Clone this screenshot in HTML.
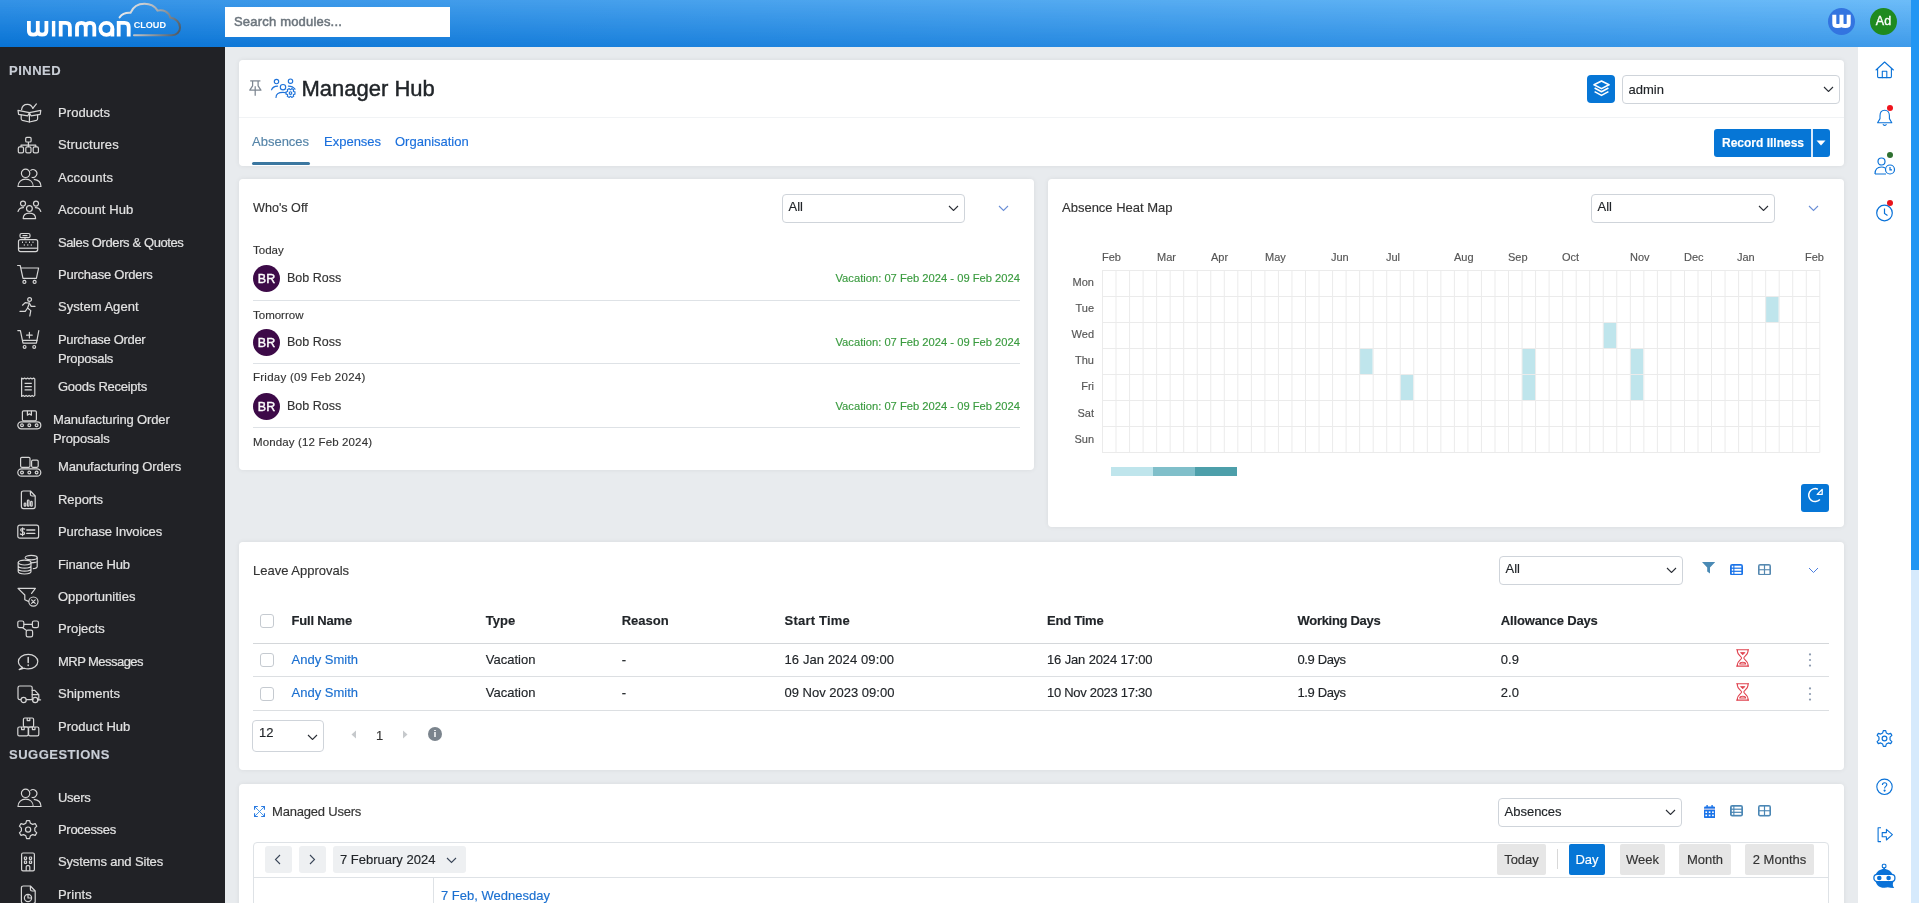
<!DOCTYPE html>
<html><head><meta charset="utf-8">
<style>
*{box-sizing:border-box;margin:0;padding:0}
html,body{width:1919px;height:903px;overflow:hidden;background:#e8ebee;font-family:"Liberation Sans",sans-serif;color:#212529;position:relative}
#wrap{position:absolute;left:0;top:0;width:1919px;height:903px;will-change:transform}
.ab{position:absolute;display:block}
.tx{position:absolute;white-space:nowrap;line-height:1;-webkit-text-stroke-width:0.15px}
#hdr{position:absolute;left:0;top:0;width:1919px;height:47px;background:linear-gradient(to right,#0873d5,#3f9bea)}
#hdr:after{content:"";position:absolute;left:0;top:0;right:0;bottom:0;background:linear-gradient(to right,#3593e6,#6dbcf8);-webkit-mask-image:linear-gradient(to bottom,#000,rgba(0,0,0,0));mask-image:linear-gradient(to bottom,#000,rgba(0,0,0,0))}
#side{position:absolute;left:0;top:47px;width:225px;height:856px;background:#212226}
.si{position:absolute;left:0;width:225px;height:19px;font-size:13px;color:#e2e2e2;line-height:19px}
.si span{position:absolute;left:58px;top:0;white-space:nowrap;-webkit-text-stroke:0.2px #e2e2e2}
.si svg{position:absolute;left:17px;top:-3px}
#rail{position:absolute;left:1858px;top:47px;width:53px;height:856px;background:#fff}
.card{position:absolute;background:#fff;border-radius:4px;box-shadow:0 0 5px rgba(0,0,0,.07)}
.sel{position:absolute;background:#fff;border:1px solid #cfd4da;border-radius:4px}
.hl{position:absolute;height:1px;background:#dee2e6}
</style></head>
<body>
<svg width="0" height="0" style="position:absolute">
<defs>
<g id="i-products" fill="none" stroke="#d6d6d6" stroke-width="1.2" stroke-linejoin="round" stroke-linecap="round">
 <path d="M4.6 9.6 C5 6 7.6 4.3 10.4 4.3 C12.8 4.3 14.8 5.6 15.8 8.2"/><path d="M15.8 8.4 L19.4 3.9"/>
 <path d="M1 10.4 L12.4 12.6 L23.8 10.4 L23.2 14.4 L14 15.8 L12.4 12.8 L10.8 15.8 L1.6 14.4 Z"/>
 <path d="M4.2 15 V18.8 Q4.2 20 5.4 20.4 L12.4 22 L19.4 20.4 Q20.6 20 20.6 18.8 V15"/><path d="M12.4 13 V22"/>
</g>
<g id="i-structures" fill="none" stroke="#d6d6d6" stroke-width="1.2" stroke-linejoin="round">
 <rect x="8.7" y="5.4" width="5.4" height="4.6" rx="1"/>
 <path d="M11.4 10 V13.2 M4 14.9 V13.2 H18.8 V14.9 M11.4 13.2 V14.9"/>
 <rect x="1.3" y="14.9" width="5.2" height="6" rx="1.4"/><rect x="8.8" y="14.9" width="5.2" height="6" rx="1.4"/><rect x="16.2" y="14.9" width="5.2" height="6" rx="1.4"/>
</g>
<g id="i-users" fill="none" stroke="#d6d6d6" stroke-width="1.2" stroke-linejoin="round">
 <circle cx="8.6" cy="8.3" r="4.2"/><path d="M13.4 5.6 A3.9 3.9 0 1 1 14.6 12.2"/>
 <path d="M1 21.5 C1 16.8 4.4 14.2 8.6 14.2 C12.8 14.2 16.2 16.8 16.2 21.5 Z"/>
 <path d="M16.8 14.4 C21 14.8 24 17.4 24 21.5 H16.2"/>
</g>
<g id="i-hub" fill="none" stroke="#d6d6d6" stroke-width="1.2" stroke-linejoin="round" stroke-linecap="round">
 <circle cx="6" cy="6.6" r="2.5"/><circle cx="19" cy="6.6" r="2.5"/><circle cx="12.4" cy="11.6" r="2.9"/>
 <path d="M1 14.5 C1.8 11.9 3.6 10.6 6.5 10.6 M23.8 14.5 C23 11.9 21.2 10.6 18.4 10.6"/>
 <path d="M6.2 21.6 C6.2 18.2 8.8 16.2 12.4 16.2 C16 16.2 18.6 18.2 18.6 21.6 Z"/>
</g>
<g id="i-register" fill="none" stroke="#d6d6d6" stroke-width="1.2" stroke-linejoin="round">
 <rect x="3" y="3.5" width="10" height="4.2" rx="1.5"/><path d="M5.5 5.6 H10.5"/>
 <path d="M8 7.7 V9.6"/>
 <rect x="1.5" y="9.6" width="19.2" height="12" rx="2"/><path d="M1.5 18.2 H20.7"/>
 <path d="M5 12.2 H6 M8.5 12.2 H9.5 M12 12.2 H13 M15.5 12.2 H16.5 M6.8 15 H7.8 M10.3 15 H11.3 M13.8 15 H14.8" stroke-width="1.4"/>
</g>
<g id="i-cart" fill="none" stroke="#d6d6d6" stroke-width="1.2" stroke-linejoin="round" stroke-linecap="round">
 <path d="M0.6 3.5 H3.2 L6 16.4 H19.4 L21.6 6 H3.8"/>
 <circle cx="7.4" cy="19.9" r="1.5"/><circle cx="17.6" cy="19.9" r="1.5"/>
</g>
<g id="i-run" fill="none" stroke="#d6d6d6" stroke-width="1.2" stroke-linejoin="round" stroke-linecap="round">
 <circle cx="12.6" cy="5.5" r="1.9"/>
 <path d="M5.5 11.2 L8.2 8.6 L12.4 9.2 L10.6 14 L13.8 16.6 L12.8 22"/>
 <path d="M10.6 14 L8.2 17.4 H3"/><path d="M12.4 9.2 L14.2 12.4 H18"/>
</g>
<g id="i-cartplus" fill="none" stroke="#d6d6d6" stroke-width="1.2" stroke-linejoin="round" stroke-linecap="round">
 <path d="M0.8 3.6 H3.4 L6 16.2 H19.4 L21.8 3.6"/><path d="M6 13.4 H20"/>
 <path d="M12.4 5.4 V11 M9.6 8.2 H15.2"/>
 <circle cx="7.6" cy="19.9" r="1.4"/><circle cx="17.2" cy="19.9" r="1.4"/>
</g>
<g id="i-receipt" fill="none" stroke="#d6d6d6" stroke-width="1.2" stroke-linejoin="round">
 <path d="M4.6 4 L6.1 5 L7.6 4 L9.1 5 L10.6 4 L12.1 5 L13.6 4 L15.1 5 L16.6 4 L17.8 5 V21.4 L16.6 22.4 L15.1 21.4 L13.6 22.4 L12.1 21.4 L10.6 22.4 L9.1 21.4 L7.6 22.4 L6.1 21.4 L4.6 22.4 Z"/>
 <path d="M7.6 9.4 H14.8 M7.6 12.6 H14.8 M7.6 15.8 H14.8" stroke-width="1.3"/>
</g>
<g id="i-conv1" fill="none" stroke="#d6d6d6" stroke-width="1.2" stroke-linejoin="round">
 <rect x="5.4" y="3.8" width="14" height="10" rx="1.2"/><path d="M10.4 3.8 V8.2 L12.4 6.8 L14.4 8.2 V3.8"/>
 <rect x="0.8" y="14.8" width="23" height="7" rx="3.5"/>
 <circle cx="5" cy="18.3" r="1.4"/><circle cx="12.3" cy="18.3" r="1.4"/><circle cx="19.6" cy="18.3" r="1.4"/>
</g>
<g id="i-conv2" fill="none" stroke="#d6d6d6" stroke-width="1.2" stroke-linejoin="round">
 <rect x="3.6" y="3.3" width="9.4" height="10" rx="1.2"/><rect x="14.6" y="6.2" width="6.6" height="7.1" rx="1.2"/>
 <rect x="0.8" y="14.8" width="23" height="7.4" rx="3.7"/>
 <circle cx="5" cy="18.5" r="1.4"/><circle cx="12.3" cy="18.5" r="1.4"/><circle cx="19.6" cy="18.5" r="1.4"/>
</g>
<g id="i-report" fill="none" stroke="#d6d6d6" stroke-width="1.2" stroke-linejoin="round">
 <path d="M6.4 4 H13.4 L18.2 9 V19.6 Q18.2 21.6 16.2 21.6 H6.4 Q4.4 21.6 4.4 19.6 V6 Q4.4 4 6.4 4 Z"/><path d="M13.4 4 V7.2 Q13.4 9 15.2 9 H18.2"/>
 <rect x="7.2" y="16" width="1.6" height="3.2" rx=".8"/><rect x="10.4" y="13" width="1.6" height="6.2" rx=".8"/><rect x="13.6" y="14.4" width="1.6" height="4.8" rx=".8"/>
</g>
<g id="i-invoice" fill="none" stroke="#d6d6d6" stroke-width="1.2" stroke-linejoin="round" stroke-linecap="round">
 <rect x="0.8" y="6.2" width="20.8" height="13" rx="2"/>
 <path d="M7.6 10.2 C7 9.4 3.6 9.2 3.6 11 C3.6 12.8 7.6 12.2 7.6 14.2 C7.6 16 4.2 15.8 3.4 15 M5.6 8.8 V16.6"/>
 <path d="M9.8 11 H17.8 M9.8 14.4 H17.8" stroke-width="1.4"/>
</g>
<g id="i-coins" fill="none" stroke="#d6d6d6" stroke-width="1.2" stroke-linejoin="round">
 <path d="M8.2 5.6 C8.2 4.3 10.9 3.4 14.2 3.4 C17.5 3.4 20.2 4.3 20.2 5.6 V14.4 C20.2 15.5 18.4 16.4 15.8 16.6"/>
 <path d="M8.2 5.6 C8.2 6.9 10.9 7.8 14.2 7.8 C17.5 7.8 20.2 6.9 20.2 5.6 M13.8 10.8 C17.2 10.8 20.2 10 20.2 9.6"/>
 <ellipse cx="7.6" cy="10.6" rx="6.4" ry="2.4"/>
 <path d="M1.2 10.6 V19.6 C1.2 21 4 22 7.6 22 C11.2 22 14 21 14 19.6 V10.6 M1.2 13.8 C1.2 15.2 4 16.2 7.6 16.2 C11.2 16.2 14 15.2 14 13.8 M1.2 16.8 C1.2 18.2 4 19.2 7.6 19.2 C11.2 19.2 14 18.2 14 16.8"/>
</g>
<g id="i-funnel" fill="none" stroke="#d6d6d6" stroke-width="1.2" stroke-linejoin="round" stroke-linecap="round">
 <path d="M11.4 17.4 L7.8 15.8 V11 L1 4.4 H18.4 L14.6 9.4"/>
 <circle cx="16.4" cy="17.6" r="4.6"/><path d="M14.6 15.8 L18.2 19.4 M18.2 15.8 L14.6 19.4"/>
</g>
<g id="i-projects" fill="none" stroke="#d6d6d6" stroke-width="1.2" stroke-linejoin="round">
 <rect x="0.8" y="5" width="6" height="6.6" rx="1.6"/><rect x="15.4" y="5" width="6" height="6.6" rx="1.6"/><rect x="9.2" y="14.2" width="6.4" height="6.6" rx="1.6"/>
 <path d="M6.8 8.3 H15.4 M5.4 11.6 L9.6 14.6"/>
</g>
<g id="i-msg" fill="none" stroke="#d6d6d6" stroke-width="1.2" stroke-linejoin="round" stroke-linecap="round">
 <path d="M5.4 18.4 C2.8 17 1.4 14.8 1.4 12.6 C1.4 8.6 5.8 5.4 11.2 5.4 C16.6 5.4 20.8 8.6 20.8 12.6 C20.8 16.6 16.6 19.8 11.2 19.8 C9.8 19.8 8.4 19.6 7.2 19.2 L2.2 20.6 Z"/>
 <path d="M11.2 8.6 V13.6 M11.2 16 V16.4" stroke-width="1.5"/>
</g>
<g id="i-truck" fill="none" stroke="#d6d6d6" stroke-width="1.2" stroke-linejoin="round" stroke-linecap="round">
 <path d="M3.6 18.6 H2.8 Q1 18.6 1 16.8 V6.8 Q1 5 2.8 5 H13.4 Q15.2 5 15.2 6.8 V18.6 H9.4"/>
 <path d="M15.2 9.4 H17.8 L21.8 13.6 V18.6 H20.6 M15.2 13.6 H21.8 M15.6 18.6 H16"/>
 <circle cx="6.6" cy="19" r="2.6"/><circle cx="18.2" cy="19" r="2.6"/><path d="M21 18.8 H23.6"/>
</g>
<g id="i-boxes" fill="none" stroke="#d6d6d6" stroke-width="1.2" stroke-linejoin="round">
 <rect x="6.4" y="4" width="10.2" height="9" rx="1.4"/><path d="M10.2 4 V6.6 H12.8 V4"/>
 <rect x="0.8" y="13" width="10.4" height="8.8" rx="1.4"/><path d="M4.6 13 V15.6 H7.2 V13"/>
 <rect x="11.6" y="13" width="10.2" height="8.8" rx="1.4"/><path d="M15.4 13 V15.6 H18 V13"/>
</g>
<g id="i-gear" fill="none" stroke="#d6d6d6" stroke-width="1.2" stroke-linejoin="round">
 <path d="M9.6 3.6 H12.6 L13.4 6.2 L15.6 7.4 L18.2 6.6 L19.8 9.2 L17.8 11.2 V13.8 L19.8 15.8 L18.2 18.4 L15.6 17.6 L13.4 18.8 L12.6 21.6 H9.6 L8.8 18.8 L6.6 17.6 L4 18.4 L2.4 15.8 L4.4 13.8 V11.2 L2.4 9.2 L4 6.6 L6.6 7.4 L8.8 6.2 Z"/>
 <circle cx="11.1" cy="12.6" r="2.6"/>
</g>
<g id="i-building" fill="none" stroke="#d6d6d6" stroke-width="1.2" stroke-linejoin="round">
 <rect x="4.6" y="4" width="12.8" height="17.8" rx="1.4"/>
 <rect x="7.4" y="8" width="2.2" height="2.4" rx=".6"/><rect x="12.4" y="8" width="2.2" height="2.4" rx=".6"/>
 <rect x="7.4" y="12" width="2.2" height="2.4" rx=".6"/><rect x="12.4" y="12" width="2.2" height="2.4" rx=".6"/>
 <path d="M9.2 21.8 V17.8 Q9.2 16.6 10.4 16.6 H11.6 Q12.8 16.6 12.8 17.8 V21.8"/>
</g>
<g id="i-print" fill="none" stroke="#d6d6d6" stroke-width="1.2" stroke-linejoin="round">
 <path d="M6.4 4 H13.4 L18.2 9 V19.6 Q18.2 21.6 16.2 21.6 H6.4 Q4.4 21.6 4.4 19.6 V6 Q4.4 4 6.4 4 Z"/><path d="M13.4 4 V7.2 Q13.4 9 15.2 9 H18.2"/>
 <circle cx="11" cy="16" r="3.6"/><path d="M11 12.4 V16 H14.6"/>
</g>
</defs></svg>
<div id="wrap"><div id="hdr"></div>
<div class="ab" style="left:225px;top:7px;width:225px;height:30px;background:#fff"></div>
<div class="tx" style="left:234px;top:15.0px;font-size:13px;color:#6c757d;font-weight:normal;-webkit-text-stroke:0.5px #6c757d;letter-spacing:0.19px">Search modules...</div>
<svg class="ab" style="left:0px;top:0px" width="190" height="44" viewBox="0 0 190 44">
<defs><linearGradient id="cg" x1="119" y1="4" x2="180" y2="35" gradientUnits="userSpaceOnUse"><stop offset="0" stop-color="#f2f4f6"/><stop offset=".45" stop-color="#b8bcc0"/><stop offset="1" stop-color="#4a5560"/></linearGradient></defs>
<path d="M119.6 17.4 C122 14 126 12.5 130.5 12.8 C133 7 138.5 3.8 144.5 3.8 C150 3.8 155 6.5 157.6 10.6 C163 9 169 12 170.2 17.5 C176 18.5 180 22.5 180 27.5 C180 32 176.5 35.2 172 35.2 H134" fill="none" stroke="url(#cg)" stroke-width="2" stroke-linecap="round"/>
<g fill="none" stroke="#fff" stroke-width="3.8">
<path d="M28.9 21 V31 Q28.9 34.6 33.2 34.6 Q37.8 34.6 37.8 31 V21 M37.8 31 Q37.8 34.6 42.1 34.6 Q46.4 34.6 46.4 31 V21"/>
<path d="M53.6 21 V36.5" stroke-width="3.4"/>
<path d="M60.7 36.5 V22.9 H65.8 Q69.9 22.9 69.9 27 V36.5"/>
<path d="M77 36.5 V27 Q77 22.9 81.4 22.9 Q85.7 22.9 85.7 27 V36.5 M85.7 27 Q85.7 22.9 90 22.9 Q94.3 22.9 94.3 27 V36.5"/>
<circle cx="106.4" cy="28.8" r="6"/><path d="M112.4 28.8 V36.5"/>
<path d="M118.7 36.5 V22.9 H124.6 Q128.7 22.9 128.7 27 V36.5"/>
</g>
<text x="133.7" y="27.7" font-family="Liberation Sans" font-weight="bold" font-size="9.4" fill="#fff" textLength="32.3" lengthAdjust="spacingAndGlyphs">CLOUD</text>
</svg>
<div class="ab" style="left:1828px;top:8px;width:27px;height:27px;border-radius:50%;background:#3374e0"></div>
<svg class="ab" style="left:1828px;top:8px" width="27" height="27" viewBox="0 0 27 27"><path d="M6.3 6.8 V15.5 Q6.3 18.1 9.3 18.1 Q13.5 18.1 13.5 15.5 V6.8 M13.5 15.5 Q13.5 18.1 17.4 18.1 Q20.7 18.1 20.7 15.5 V6.8" fill="none" stroke="#fff" stroke-width="4"/></svg>
<div class="ab" style="left:1870px;top:8px;width:27px;height:27px;border-radius:50%;background:#1f8a1f"></div>
<div class="tx" style="left:1683.5px;width:400px;text-align:center;top:14.55px;font-size:12.5px;color:#fff;font-weight:normal;-webkit-text-stroke:0.35px #fff">Ad</div>
<div id="side"></div>
<div class="tx" style="left:9px;top:64.0px;font-size:13px;color:#c9ced6;font-weight:bold;letter-spacing:0.5px">PINNED</div>
<div class="tx" style="left:9px;top:748.0px;font-size:13px;color:#c9ced6;font-weight:bold;letter-spacing:0.5px">SUGGESTIONS</div>
<div class="si" style="top:102.6px"><svg width="26" height="24" viewBox="0 0 26 24"><use href="#i-products"/></svg><span style="left:58px;letter-spacing:0.100px">Products</span></div>
<div class="si" style="top:135.0px"><svg width="26" height="24" viewBox="0 0 26 24"><use href="#i-structures"/></svg><span style="left:58px;letter-spacing:0.156px">Structures</span></div>
<div class="si" style="top:168.0px"><svg width="26" height="24" viewBox="0 0 26 24"><use href="#i-users"/></svg><span style="left:58px;letter-spacing:0.214px">Accounts</span></div>
<div class="si" style="top:199.8px"><svg width="26" height="24" viewBox="0 0 26 24"><use href="#i-hub"/></svg><span style="left:58px;letter-spacing:0.080px">Account Hub</span></div>
<div class="si" style="top:233.3px"><svg width="26" height="24" viewBox="0 0 26 24"><use href="#i-register"/></svg><span style="left:58px;letter-spacing:-0.390px">Sales Orders &amp; Quotes</span></div>
<div class="si" style="top:265.0px"><svg width="26" height="24" viewBox="0 0 26 24"><use href="#i-cart"/></svg><span style="left:58px;letter-spacing:-0.250px">Purchase Orders</span></div>
<div class="si" style="top:297.0px"><svg width="26" height="24" viewBox="0 0 26 24"><use href="#i-run"/></svg><span style="left:58px;letter-spacing:0.027px">System Agent</span></div>
<div class="si" style="top:330.3px"><svg width="26" height="24" viewBox="0 0 26 24"><use href="#i-cartplus"/></svg><span style="left:58px;letter-spacing:-0.315px">Purchase Order<br>Proposals</span></div>
<div class="si" style="top:376.6px"><svg width="26" height="24" viewBox="0 0 26 24"><use href="#i-receipt"/></svg><span style="left:58px;letter-spacing:-0.254px">Goods Receipts</span></div>
<div class="si" style="top:410.0px"><svg width="26" height="24" viewBox="0 0 26 24"><use href="#i-conv1"/></svg><span style="left:53px;letter-spacing:-0.139px">Manufacturing Order<br>Proposals</span></div>
<div class="si" style="top:457.0px"><svg width="26" height="24" viewBox="0 0 26 24"><use href="#i-conv2"/></svg><span style="left:58px;letter-spacing:-0.126px">Manufacturing Orders</span></div>
<div class="si" style="top:490.0px"><svg width="26" height="24" viewBox="0 0 26 24"><use href="#i-report"/></svg><span style="left:58px;letter-spacing:-0.067px">Reports</span></div>
<div class="si" style="top:522.0px"><svg width="26" height="24" viewBox="0 0 26 24"><use href="#i-invoice"/></svg><span style="left:58px;letter-spacing:-0.125px">Purchase Invoices</span></div>
<div class="si" style="top:555.0px"><svg width="26" height="24" viewBox="0 0 26 24"><use href="#i-coins"/></svg><span style="left:58px;letter-spacing:-0.170px">Finance Hub</span></div>
<div class="si" style="top:587.0px"><svg width="26" height="24" viewBox="0 0 26 24"><use href="#i-funnel"/></svg><span style="left:58px;letter-spacing:0.008px">Opportunities</span></div>
<div class="si" style="top:619.0px"><svg width="26" height="24" viewBox="0 0 26 24"><use href="#i-projects"/></svg><span style="left:58px;letter-spacing:-0.014px">Projects</span></div>
<div class="si" style="top:652.0px"><svg width="26" height="24" viewBox="0 0 26 24"><use href="#i-msg"/></svg><span style="left:58px;letter-spacing:-0.545px">MRP Messages</span></div>
<div class="si" style="top:684.0px"><svg width="26" height="24" viewBox="0 0 26 24"><use href="#i-truck"/></svg><span style="left:58px;letter-spacing:0.075px">Shipments</span></div>
<div class="si" style="top:717.0px"><svg width="26" height="24" viewBox="0 0 26 24"><use href="#i-boxes"/></svg><span style="left:58px;letter-spacing:-0.000px">Product Hub</span></div>
<div class="si" style="top:788.0px"><svg width="26" height="24" viewBox="0 0 26 24"><use href="#i-users"/></svg><span style="left:58px;letter-spacing:-0.325px">Users</span></div>
<div class="si" style="top:820.0px"><svg width="26" height="24" viewBox="0 0 26 24"><use href="#i-gear"/></svg><span style="left:58px;letter-spacing:-0.312px">Processes</span></div>
<div class="si" style="top:852.0px"><svg width="26" height="24" viewBox="0 0 26 24"><use href="#i-building"/></svg><span style="left:58px;letter-spacing:-0.156px">Systems and Sites</span></div>
<div class="si" style="top:885.0px"><svg width="26" height="24" viewBox="0 0 26 24"><use href="#i-print"/></svg><span style="left:58px;letter-spacing:0.120px">Prints</span></div>
<div id="rail"></div>
<div class="ab" style="left:1911px;top:0;width:8px;height:903px;background:#d6eafc"></div>
<div class="ab" style="left:1911px;top:0;width:8px;height:570px;background:#2196f3"></div>
<div class="card" style="left:239px;top:60px;width:1605px;height:106px"></div>
<div class="hl" style="left:239px;top:117px;width:1605px;background:#f1f3f5"></div>
<div class="tx" style="left:301.5px;top:77.5px;font-size:22px;color:#212529;font-weight:normal;-webkit-text-stroke:0.45px #212529">Manager Hub</div>
<div class="tx" style="left:252px;top:135.0px;font-size:13px;color:#5584a8;font-weight:normal;">Absences</div>
<div class="tx" style="left:324px;top:135.0px;font-size:13px;color:#1a6fdc;font-weight:normal;">Expenses</div>
<div class="tx" style="left:395px;top:135.0px;font-size:13px;color:#1a6fdc;font-weight:normal;">Organisation</div>
<div class="ab" style="left:252px;top:162px;width:58px;height:3px;border-radius:2px;background:#3b77a0"></div>
<div class="ab" style="left:1587px;top:75px;width:28px;height:28px;border-radius:4px;background:#0676d6"></div>
<svg class="ab" style="left:1592.5px;top:80px" width="17" height="17" viewBox="0 0 17 17" fill="none" stroke="#fff" stroke-width="1.6" stroke-linejoin="round"><path d="M8.5 1 L16 4.8 L8.5 8.6 L1 4.8 Z"/><path d="M1.6 8 L8.5 11.8 L15.4 8"/><path d="M1.6 11.6 L8.5 15.4 L15.4 11.6"/></svg>
<div class="sel" style="left:1622px;top:75px;width:218px;height:29px"></div><div class="tx" style="left:1628.5px;top:82.9px;font-size:13px;color:#212529;font-weight:normal;">admin</div><svg class="ab" style="left:1823px;top:85.9px" width="11" height="6.5" viewBox="-1 -1 11 6.5"><path d="M0 0 L4.5 4.5 L9 0" fill="none" stroke="#2b2f36" stroke-width="1.1"/></svg>
<div class="ab" style="left:1714px;top:129px;width:116px;height:28px;border-radius:3px;background:#0676d6"></div>
<div class="ab" style="left:1811px;top:129px;width:1.5px;height:28px;background:#dbeafa"></div>
<div class="tx" style="left:1722px;top:137.0px;font-size:12px;color:#fff;font-weight:bold;">Record Illness</div>
<svg class="ab" style="left:1816px;top:140px" width="10" height="6" viewBox="0 0 10 6"><path d="M0.5 0.5 H9.5 L5 5.5 Z" fill="#fff"/></svg>
<div class="card" style="left:239px;top:179px;width:795px;height:291px"></div>
<div class="tx" style="left:253px;top:201.7px;font-size:12.6px;color:#333;font-weight:normal;">Who's Off</div>
<div class="sel" style="left:782px;top:194px;width:183px;height:29px"></div><div class="tx" style="left:788.5px;top:200.2px;font-size:13px;color:#212529;font-weight:normal;">All</div><svg class="ab" style="left:948px;top:204.9px" width="11" height="6.5" viewBox="-1 -1 11 6.5"><path d="M0 0 L4.5 4.5 L9 0" fill="none" stroke="#2b2f36" stroke-width="1.1"/></svg>
<svg class="ab" style="left:998px;top:205px" width="11" height="6.5" viewBox="-1 -1 11 6.5"><path d="M0 0 L4.5 4.5 L9 0" fill="none" stroke="#6b8fd6" stroke-width="1.1"/></svg>
<div class="tx" style="left:253px;top:245.25px;font-size:11.5px;color:#333;font-weight:normal;">Today</div>
<div class="ab" style="left:253px;top:265px;width:27px;height:27px;border-radius:50%;background:#3d0a48"></div>
<div class="tx" style="left:66.5px;width:400px;text-align:center;top:272.75px;font-size:12.5px;color:#fff;font-weight:normal;-webkit-text-stroke:0.4px #fff">BR</div>
<div class="tx" style="left:287px;top:271.75px;font-size:12.5px;color:#333;font-weight:normal;">Bob Ross</div>
<div class="tx" style="right:899px;top:273.0px;font-size:11.2px;color:#3a9b3f;font-weight:normal;">Vacation: 07 Feb 2024 - 09 Feb 2024</div>
<div class="hl" style="left:253px;top:300px;width:767px"></div>
<div class="tx" style="left:253px;top:309.65px;font-size:11.5px;color:#333;font-weight:normal;">Tomorrow</div>
<div class="ab" style="left:253px;top:329px;width:27px;height:27px;border-radius:50%;background:#3d0a48"></div>
<div class="tx" style="left:66.5px;width:400px;text-align:center;top:336.75px;font-size:12.5px;color:#fff;font-weight:normal;-webkit-text-stroke:0.4px #fff">BR</div>
<div class="tx" style="left:287px;top:335.75px;font-size:12.5px;color:#333;font-weight:normal;">Bob Ross</div>
<div class="tx" style="right:899px;top:337.0px;font-size:11.2px;color:#3a9b3f;font-weight:normal;">Vacation: 07 Feb 2024 - 09 Feb 2024</div>
<div class="hl" style="left:253px;top:363px;width:767px"></div>
<div class="tx" style="left:253px;top:372.25px;font-size:11.5px;color:#333;font-weight:normal;letter-spacing:0.26px">Friday (09 Feb 2024)</div>
<div class="ab" style="left:253px;top:393px;width:27px;height:27px;border-radius:50%;background:#3d0a48"></div>
<div class="tx" style="left:66.5px;width:400px;text-align:center;top:400.75px;font-size:12.5px;color:#fff;font-weight:normal;-webkit-text-stroke:0.4px #fff">BR</div>
<div class="tx" style="left:287px;top:399.75px;font-size:12.5px;color:#333;font-weight:normal;">Bob Ross</div>
<div class="tx" style="right:899px;top:401.0px;font-size:11.2px;color:#3a9b3f;font-weight:normal;">Vacation: 07 Feb 2024 - 09 Feb 2024</div>
<div class="hl" style="left:253px;top:427px;width:767px"></div>
<div class="tx" style="left:253px;top:436.65px;font-size:11.5px;color:#333;font-weight:normal;letter-spacing:0.14px">Monday (12 Feb 2024)</div>
<div class="card" style="left:1048px;top:179px;width:796px;height:348px"></div>
<div class="tx" style="left:1062px;top:201.0px;font-size:13px;color:#333;font-weight:normal;">Absence Heat Map</div>
<div class="sel" style="left:1591px;top:194px;width:184px;height:29px"></div><div class="tx" style="left:1597.5px;top:200.2px;font-size:13px;color:#212529;font-weight:normal;">All</div><svg class="ab" style="left:1758px;top:204.9px" width="11" height="6.5" viewBox="-1 -1 11 6.5"><path d="M0 0 L4.5 4.5 L9 0" fill="none" stroke="#2b2f36" stroke-width="1.1"/></svg>
<svg class="ab" style="left:1808px;top:205px" width="11" height="6.5" viewBox="-1 -1 11 6.5"><path d="M0 0 L4.5 4.5 L9 0" fill="none" stroke="#6b8fd6" stroke-width="1.1"/></svg>
<svg class="ab" style="left:1102px;top:270px" width="720" height="184" viewBox="0 0 720 184"><rect x="257.65" y="78.5" width="13.03" height="25.5" fill="#bfe5ec"/><rect x="298.25" y="104.5" width="13.03" height="25.5" fill="#bfe5ec"/><rect x="420.05" y="78.5" width="13.03" height="25.5" fill="#bfe5ec"/><rect x="420.05" y="104.5" width="13.03" height="25.5" fill="#bfe5ec"/><rect x="501.26" y="52.5" width="13.03" height="25.5" fill="#bfe5ec"/><rect x="528.33" y="78.5" width="13.03" height="25.5" fill="#bfe5ec"/><rect x="528.33" y="104.5" width="13.03" height="25.5" fill="#bfe5ec"/><rect x="663.67" y="26.5" width="13.03" height="25.5" fill="#bfe5ec"/><line x1="0.50" y1="0" x2="0.50" y2="182.5" stroke="#ebebeb" stroke-width="1"/><line x1="14.03" y1="0" x2="14.03" y2="182.5" stroke="#ebebeb" stroke-width="1"/><line x1="27.57" y1="0" x2="27.57" y2="182.5" stroke="#ebebeb" stroke-width="1"/><line x1="41.10" y1="0" x2="41.10" y2="182.5" stroke="#ebebeb" stroke-width="1"/><line x1="54.64" y1="0" x2="54.64" y2="182.5" stroke="#ebebeb" stroke-width="1"/><line x1="68.17" y1="0" x2="68.17" y2="182.5" stroke="#ebebeb" stroke-width="1"/><line x1="81.70" y1="0" x2="81.70" y2="182.5" stroke="#ebebeb" stroke-width="1"/><line x1="95.24" y1="0" x2="95.24" y2="182.5" stroke="#ebebeb" stroke-width="1"/><line x1="108.77" y1="0" x2="108.77" y2="182.5" stroke="#ebebeb" stroke-width="1"/><line x1="122.31" y1="0" x2="122.31" y2="182.5" stroke="#ebebeb" stroke-width="1"/><line x1="135.84" y1="0" x2="135.84" y2="182.5" stroke="#ebebeb" stroke-width="1"/><line x1="149.37" y1="0" x2="149.37" y2="182.5" stroke="#ebebeb" stroke-width="1"/><line x1="162.91" y1="0" x2="162.91" y2="182.5" stroke="#ebebeb" stroke-width="1"/><line x1="176.44" y1="0" x2="176.44" y2="182.5" stroke="#ebebeb" stroke-width="1"/><line x1="189.98" y1="0" x2="189.98" y2="182.5" stroke="#ebebeb" stroke-width="1"/><line x1="203.51" y1="0" x2="203.51" y2="182.5" stroke="#ebebeb" stroke-width="1"/><line x1="217.04" y1="0" x2="217.04" y2="182.5" stroke="#ebebeb" stroke-width="1"/><line x1="230.58" y1="0" x2="230.58" y2="182.5" stroke="#ebebeb" stroke-width="1"/><line x1="244.11" y1="0" x2="244.11" y2="182.5" stroke="#ebebeb" stroke-width="1"/><line x1="257.65" y1="0" x2="257.65" y2="182.5" stroke="#ebebeb" stroke-width="1"/><line x1="271.18" y1="0" x2="271.18" y2="182.5" stroke="#ebebeb" stroke-width="1"/><line x1="284.71" y1="0" x2="284.71" y2="182.5" stroke="#ebebeb" stroke-width="1"/><line x1="298.25" y1="0" x2="298.25" y2="182.5" stroke="#ebebeb" stroke-width="1"/><line x1="311.78" y1="0" x2="311.78" y2="182.5" stroke="#ebebeb" stroke-width="1"/><line x1="325.32" y1="0" x2="325.32" y2="182.5" stroke="#ebebeb" stroke-width="1"/><line x1="338.85" y1="0" x2="338.85" y2="182.5" stroke="#ebebeb" stroke-width="1"/><line x1="352.38" y1="0" x2="352.38" y2="182.5" stroke="#ebebeb" stroke-width="1"/><line x1="365.92" y1="0" x2="365.92" y2="182.5" stroke="#ebebeb" stroke-width="1"/><line x1="379.45" y1="0" x2="379.45" y2="182.5" stroke="#ebebeb" stroke-width="1"/><line x1="392.99" y1="0" x2="392.99" y2="182.5" stroke="#ebebeb" stroke-width="1"/><line x1="406.52" y1="0" x2="406.52" y2="182.5" stroke="#ebebeb" stroke-width="1"/><line x1="420.05" y1="0" x2="420.05" y2="182.5" stroke="#ebebeb" stroke-width="1"/><line x1="433.59" y1="0" x2="433.59" y2="182.5" stroke="#ebebeb" stroke-width="1"/><line x1="447.12" y1="0" x2="447.12" y2="182.5" stroke="#ebebeb" stroke-width="1"/><line x1="460.66" y1="0" x2="460.66" y2="182.5" stroke="#ebebeb" stroke-width="1"/><line x1="474.19" y1="0" x2="474.19" y2="182.5" stroke="#ebebeb" stroke-width="1"/><line x1="487.72" y1="0" x2="487.72" y2="182.5" stroke="#ebebeb" stroke-width="1"/><line x1="501.26" y1="0" x2="501.26" y2="182.5" stroke="#ebebeb" stroke-width="1"/><line x1="514.79" y1="0" x2="514.79" y2="182.5" stroke="#ebebeb" stroke-width="1"/><line x1="528.33" y1="0" x2="528.33" y2="182.5" stroke="#ebebeb" stroke-width="1"/><line x1="541.86" y1="0" x2="541.86" y2="182.5" stroke="#ebebeb" stroke-width="1"/><line x1="555.39" y1="0" x2="555.39" y2="182.5" stroke="#ebebeb" stroke-width="1"/><line x1="568.93" y1="0" x2="568.93" y2="182.5" stroke="#ebebeb" stroke-width="1"/><line x1="582.46" y1="0" x2="582.46" y2="182.5" stroke="#ebebeb" stroke-width="1"/><line x1="596.00" y1="0" x2="596.00" y2="182.5" stroke="#ebebeb" stroke-width="1"/><line x1="609.53" y1="0" x2="609.53" y2="182.5" stroke="#ebebeb" stroke-width="1"/><line x1="623.06" y1="0" x2="623.06" y2="182.5" stroke="#ebebeb" stroke-width="1"/><line x1="636.60" y1="0" x2="636.60" y2="182.5" stroke="#ebebeb" stroke-width="1"/><line x1="650.13" y1="0" x2="650.13" y2="182.5" stroke="#ebebeb" stroke-width="1"/><line x1="663.67" y1="0" x2="663.67" y2="182.5" stroke="#ebebeb" stroke-width="1"/><line x1="677.20" y1="0" x2="677.20" y2="182.5" stroke="#ebebeb" stroke-width="1"/><line x1="690.73" y1="0" x2="690.73" y2="182.5" stroke="#ebebeb" stroke-width="1"/><line x1="704.27" y1="0" x2="704.27" y2="182.5" stroke="#ebebeb" stroke-width="1"/><line x1="717.80" y1="0" x2="717.80" y2="182.5" stroke="#ebebeb" stroke-width="1"/><line x1="0" y1="0.5" x2="717.80" y2="0.5" stroke="#ebebeb" stroke-width="1"/><line x1="0" y1="26.5" x2="717.80" y2="26.5" stroke="#ebebeb" stroke-width="1"/><line x1="0" y1="52.5" x2="717.80" y2="52.5" stroke="#ebebeb" stroke-width="1"/><line x1="0" y1="78.5" x2="717.80" y2="78.5" stroke="#ebebeb" stroke-width="1"/><line x1="0" y1="104.5" x2="717.80" y2="104.5" stroke="#ebebeb" stroke-width="1"/><line x1="0" y1="130.5" x2="717.80" y2="130.5" stroke="#ebebeb" stroke-width="1"/><line x1="0" y1="156.5" x2="717.80" y2="156.5" stroke="#ebebeb" stroke-width="1"/><line x1="0" y1="182.5" x2="717.80" y2="182.5" stroke="#ebebeb" stroke-width="1"/></svg>
<div class="tx" style="left:1102px;top:251.5px;font-size:11px;color:#555;font-weight:normal;">Feb</div>
<div class="tx" style="left:1157px;top:251.5px;font-size:11px;color:#555;font-weight:normal;">Mar</div>
<div class="tx" style="left:1211px;top:251.5px;font-size:11px;color:#555;font-weight:normal;">Apr</div>
<div class="tx" style="left:1265px;top:251.5px;font-size:11px;color:#555;font-weight:normal;">May</div>
<div class="tx" style="left:1331px;top:251.5px;font-size:11px;color:#555;font-weight:normal;">Jun</div>
<div class="tx" style="left:1386px;top:251.5px;font-size:11px;color:#555;font-weight:normal;">Jul</div>
<div class="tx" style="left:1454px;top:251.5px;font-size:11px;color:#555;font-weight:normal;">Aug</div>
<div class="tx" style="left:1508px;top:251.5px;font-size:11px;color:#555;font-weight:normal;">Sep</div>
<div class="tx" style="left:1562px;top:251.5px;font-size:11px;color:#555;font-weight:normal;">Oct</div>
<div class="tx" style="left:1630px;top:251.5px;font-size:11px;color:#555;font-weight:normal;">Nov</div>
<div class="tx" style="left:1684px;top:251.5px;font-size:11px;color:#555;font-weight:normal;">Dec</div>
<div class="tx" style="left:1737px;top:251.5px;font-size:11px;color:#555;font-weight:normal;">Jan</div>
<div class="tx" style="left:1805px;top:251.5px;font-size:11px;color:#555;font-weight:normal;">Feb</div>
<div class="tx" style="right:825px;top:276.5px;font-size:11px;color:#555;font-weight:normal;">Mon</div>
<div class="tx" style="right:825px;top:302.7px;font-size:11px;color:#555;font-weight:normal;">Tue</div>
<div class="tx" style="right:825px;top:328.9px;font-size:11px;color:#555;font-weight:normal;">Wed</div>
<div class="tx" style="right:825px;top:355.1px;font-size:11px;color:#555;font-weight:normal;">Thu</div>
<div class="tx" style="right:825px;top:381.3px;font-size:11px;color:#555;font-weight:normal;">Fri</div>
<div class="tx" style="right:825px;top:407.5px;font-size:11px;color:#555;font-weight:normal;">Sat</div>
<div class="tx" style="right:825px;top:433.7px;font-size:11px;color:#555;font-weight:normal;">Sun</div>
<div class="ab" style="left:1111px;top:467px;width:42px;height:9px;background:#bfe5ec"></div>
<div class="ab" style="left:1153px;top:467px;width:42px;height:9px;background:#80bfca"></div>
<div class="ab" style="left:1195px;top:467px;width:42px;height:9px;background:#4d9faa"></div>
<div class="ab" style="left:1801px;top:484px;width:28px;height:28px;border-radius:3px;background:#0676d6"></div>
<svg class="ab" style="left:1806px;top:486px" width="18" height="18" viewBox="0 0 18 18" fill="none" stroke="#fff" stroke-width="1.5"><path d="M13.9 13.6 A6.5 6.5 0 1 1 11.9 3.2"/><path d="M16.2 3.4 V8.4 H11.2 Z" stroke-width="1.3" stroke-linejoin="round"/></svg>
<div class="card" style="left:239px;top:542px;width:1605px;height:228px"></div>
<div class="tx" style="left:253px;top:563.6px;font-size:13px;color:#333;font-weight:normal;">Leave Approvals</div>
<div class="sel" style="left:1499px;top:556px;width:184px;height:29px"></div><div class="tx" style="left:1505.5px;top:562.2px;font-size:13px;color:#212529;font-weight:normal;">All</div><svg class="ab" style="left:1666px;top:566.9px" width="11" height="6.5" viewBox="-1 -1 11 6.5"><path d="M0 0 L4.5 4.5 L9 0" fill="none" stroke="#2b2f36" stroke-width="1.1"/></svg>
<svg class="ab" style="left:1701.7px;top:562.4px" width="13.2" height="11.4" viewBox="0 0 13.2 11.4"><path d="M0 0 H13.2 L8 5.6 V11.4 L5.2 9.6 V5.6 Z" fill="#4a8ab5"/></svg>
<svg class="ab" style="left:1730px;top:563.5px" width="13" height="11.5" viewBox="0 0 13 11.5"><rect x="0" y="0" width="13" height="11.5" rx="2.2" fill="#1a73e8"/><g fill="#fff"><rect x="1.8" y="1.7" width="1.5" height="1.9"/><rect x="1.8" y="4.8" width="1.5" height="1.9"/><rect x="1.8" y="7.9" width="1.5" height="1.9"/><rect x="4.4" y="1.7" width="6.9" height="1.9"/><rect x="4.4" y="4.8" width="6.9" height="1.9"/><rect x="4.4" y="7.9" width="6.9" height="1.9"/></g></svg>
<svg class="ab" style="left:1758.2px;top:563.5px" width="13" height="11.5" viewBox="0 0 13 11.5"><rect x="0" y="0" width="13" height="11.5" rx="2.2" fill="#5588b0"/><g fill="#fff"><rect x="1.6" y="1.6" width="4.3" height="3.6"/><rect x="7.1" y="1.6" width="4.3" height="3.6"/><rect x="1.6" y="6.3" width="4.3" height="3.6"/><rect x="7.1" y="6.3" width="4.3" height="3.6"/></g></svg>
<svg class="ab" style="left:1807.5px;top:567px" width="11" height="6.5" viewBox="-1 -1 11 6.5"><path d="M0 0 L4.5 4.5 L9 0" fill="none" stroke="#4a7de0" stroke-width="1.0"/></svg>
<div class="tx" style="left:291.5px;top:613.6px;font-size:13px;color:#212529;font-weight:bold;letter-spacing:-0.188px">Full Name</div>
<div class="tx" style="left:485.8px;top:613.6px;font-size:13px;color:#212529;font-weight:bold;letter-spacing:0.000px">Type</div>
<div class="tx" style="left:621.7px;top:613.6px;font-size:13px;color:#212529;font-weight:bold;letter-spacing:0.000px">Reason</div>
<div class="tx" style="left:784.5px;top:613.6px;font-size:13px;color:#212529;font-weight:bold;letter-spacing:0.222px">Start Time</div>
<div class="tx" style="left:1047px;top:613.6px;font-size:13px;color:#212529;font-weight:bold;letter-spacing:-0.229px">End Time</div>
<div class="tx" style="left:1297.5px;top:613.6px;font-size:13px;color:#212529;font-weight:bold;letter-spacing:-0.300px">Working Days</div>
<div class="tx" style="left:1500.8px;top:613.6px;font-size:13px;color:#212529;font-weight:bold;letter-spacing:-0.154px">Allowance Days</div>
<div class="ab" style="left:260px;top:614px;width:14px;height:14px;border:1px solid #c5cad0;border-radius:3px;background:#fff"></div>
<div class="hl" style="left:253px;top:643px;width:1576px;background:#d4d7da"></div>
<div class="ab" style="left:260px;top:653px;width:14px;height:14px;border:1px solid #c5cad0;border-radius:3px;background:#fff"></div>
<div class="tx" style="left:291.5px;top:653.0px;font-size:13px;color:#1a6fd0;font-weight:normal;letter-spacing:0.000px">Andy Smith</div>
<div class="tx" style="left:485.8px;top:653.0px;font-size:13px;color:#212529;font-weight:normal;letter-spacing:0.000px">Vacation</div>
<div class="tx" style="left:621.7px;top:653.0px;font-size:13px;color:#212529;font-weight:normal;letter-spacing:0.000px">-</div>
<div class="tx" style="left:784.5px;top:653.0px;font-size:13px;color:#212529;font-weight:normal;letter-spacing:0.113px">16 Jan 2024 09:00</div>
<div class="tx" style="left:1047px;top:653.0px;font-size:13px;color:#212529;font-weight:normal;letter-spacing:-0.138px">16 Jan 2024 17:00</div>
<div class="tx" style="left:1297.5px;top:653.0px;font-size:13px;color:#212529;font-weight:normal;letter-spacing:-0.386px">0.9 Days</div>
<div class="tx" style="left:1500.8px;top:653.0px;font-size:13px;color:#212529;font-weight:normal;letter-spacing:0.000px">0.9</div>
<div class="hl" style="left:253px;top:676px;width:1576px;background:#dcdfe2"></div>
<svg class="ab" style="left:1735.5px;top:649px" width="13.4" height="18" viewBox="0 0 13.4 18" fill="none" stroke="#e0434f" stroke-width="1.15"><path d="M0.2 0.7 H13.2 M0.2 17.2 H13.2"/><path d="M1.4 0.7 V2.6 C1.4 5.6 5.4 7.4 5.6 9 C5.4 10.6 1.4 12.4 1.4 15.4 V17.2 M12 0.7 V2.6 C12 5.6 8 7.4 7.8 9 C8 10.6 12 12.4 12 15.4 V17.2"/><path d="M4.5 3.6 H8.9 L6.7 5.8 Z" fill="#e0434f" stroke-width=".8"/><path d="M3.8 15 Q3.8 13.2 6.7 13.2 Q9.6 13.2 9.6 15 Z" stroke-width="1.1"/></svg>
<svg class="ab" style="left:1807.5px;top:653.2px" width="4" height="14" viewBox="0 0 4 14" fill="#8d9bb0"><circle cx="2" cy="1.4" r="1.1"/><circle cx="2" cy="7" r="1.1"/><circle cx="2" cy="12.6" r="1.1"/></svg>
<div class="ab" style="left:260px;top:687px;width:14px;height:14px;border:1px solid #c5cad0;border-radius:3px;background:#fff"></div>
<div class="tx" style="left:291.5px;top:686.0px;font-size:13px;color:#1a6fd0;font-weight:normal;letter-spacing:0.000px">Andy Smith</div>
<div class="tx" style="left:485.8px;top:686.0px;font-size:13px;color:#212529;font-weight:normal;letter-spacing:0.000px">Vacation</div>
<div class="tx" style="left:621.7px;top:686.0px;font-size:13px;color:#212529;font-weight:normal;letter-spacing:0.000px">-</div>
<div class="tx" style="left:784.5px;top:686.0px;font-size:13px;color:#212529;font-weight:normal;letter-spacing:0.000px">09 Nov 2023 09:00</div>
<div class="tx" style="left:1047px;top:686.0px;font-size:13px;color:#212529;font-weight:normal;letter-spacing:-0.294px">10 Nov 2023 17:30</div>
<div class="tx" style="left:1297.5px;top:686.0px;font-size:13px;color:#212529;font-weight:normal;letter-spacing:-0.386px">1.9 Days</div>
<div class="tx" style="left:1500.8px;top:686.0px;font-size:13px;color:#212529;font-weight:normal;letter-spacing:0.000px">2.0</div>
<div class="hl" style="left:253px;top:710px;width:1576px;background:#dcdfe2"></div>
<svg class="ab" style="left:1735.5px;top:683px" width="13.4" height="18" viewBox="0 0 13.4 18" fill="none" stroke="#e0434f" stroke-width="1.15"><path d="M0.2 0.7 H13.2 M0.2 17.2 H13.2"/><path d="M1.4 0.7 V2.6 C1.4 5.6 5.4 7.4 5.6 9 C5.4 10.6 1.4 12.4 1.4 15.4 V17.2 M12 0.7 V2.6 C12 5.6 8 7.4 7.8 9 C8 10.6 12 12.4 12 15.4 V17.2"/><path d="M4.5 3.6 H8.9 L6.7 5.8 Z" fill="#e0434f" stroke-width=".8"/><path d="M3.8 15 Q3.8 13.2 6.7 13.2 Q9.6 13.2 9.6 15 Z" stroke-width="1.1"/></svg>
<svg class="ab" style="left:1807.5px;top:687.2px" width="4" height="14" viewBox="0 0 4 14" fill="#8d9bb0"><circle cx="2" cy="1.4" r="1.1"/><circle cx="2" cy="7" r="1.1"/><circle cx="2" cy="12.6" r="1.1"/></svg>
<div class="sel" style="left:252px;top:720px;width:72px;height:32px"></div>
<div class="tx" style="left:259px;top:726.2px;font-size:13px;color:#212529;font-weight:normal;">12</div>
<svg class="ab" style="left:307px;top:733.5px" width="11" height="6.5" viewBox="-1 -1 11 6.5"><path d="M0 0 L4.5 4.5 L9 0" fill="none" stroke="#2b2f36" stroke-width="1.1"/></svg>
<svg class="ab" style="left:351px;top:730px" width="6" height="9" viewBox="0 0 6 9"><path d="M5 0.5 V8.5 L0.5 4.5 Z" fill="#c6c9cc"/></svg>
<div class="tx" style="left:179.5px;width:400px;text-align:center;top:729.0px;font-size:13px;color:#333;font-weight:normal;">1</div>
<svg class="ab" style="left:402px;top:730px" width="6" height="9" viewBox="0 0 6 9"><path d="M1 0.5 V8.5 L5.5 4.5 Z" fill="#c6c9cc"/></svg>
<div class="ab" style="left:428px;top:727px;width:14px;height:14px;border-radius:50%;background:#7b848d"></div>
<div class="tx" style="left:235px;width:400px;text-align:center;top:730.0px;font-size:9px;color:#fff;font-weight:bold;">i</div>
<div class="card" style="left:239px;top:784px;width:1605px;height:140px"></div>
<svg class="ab" style="left:253.8px;top:805.9px" width="11" height="11" viewBox="0 0 11 11"><g fill="#2a78e0"><path d="M0 0 H3.8 V1.1 H1.1 V3.8 H0 Z"/><path d="M11 0 H7.2 V1.1 H9.9 V3.8 H11 Z"/><path d="M0 11 H3.8 V9.9 H1.1 V7.2 H0 Z"/><path d="M11 11 H7.2 V9.9 H9.9 V7.2 H11 Z"/></g><path d="M0.8 0.8 L10.2 10.2 M10.2 0.8 L0.8 10.2" stroke="#3a8ee6" stroke-width="0.9"/></svg>
<div class="tx" style="left:272px;top:805.4px;font-size:13px;color:#333;font-weight:normal;letter-spacing:-0.2px">Managed Users</div>
<div class="sel" style="left:1498px;top:798px;width:184px;height:29px"></div><div class="tx" style="left:1504.5px;top:805.4px;font-size:13px;color:#212529;font-weight:normal;">Absences</div><svg class="ab" style="left:1665px;top:808.9px" width="11" height="6.5" viewBox="-1 -1 11 6.5"><path d="M0 0 L4.5 4.5 L9 0" fill="none" stroke="#2b2f36" stroke-width="1.1"/></svg>
<svg class="ab" style="left:1703.7px;top:804.6px" width="11.2" height="13.1" viewBox="0 0 11.2 13.1"><rect x="0" y="1.6" width="11.2" height="11.5" rx="1.2" fill="#1a73e8"/><rect x="2.4" y="0" width="1.4" height="2.4" fill="#1a73e8"/><rect x="7.4" y="0" width="1.4" height="2.4" fill="#1a73e8"/><rect x="0" y="3.4" width="11.2" height="1.6" fill="#a9bdea"/><g fill="#fff"><rect x="1.4" y="6.4" width="1.7" height="1.6"/><rect x="4.75" y="6.4" width="1.7" height="1.6"/><rect x="8.1" y="6.4" width="1.7" height="1.6"/><rect x="1.4" y="9.6" width="1.7" height="1.6"/><rect x="4.75" y="9.6" width="1.7" height="1.6"/><rect x="8.1" y="9.6" width="1.7" height="1.6"/></g></svg>
<svg class="ab" style="left:1730.1px;top:805.2px" width="13" height="11.5" viewBox="0 0 13 11.5"><rect x="0" y="0" width="13" height="11.5" rx="2.2" fill="#4a86b4"/><g fill="#fff"><rect x="1.8" y="1.7" width="1.5" height="1.9"/><rect x="1.8" y="4.8" width="1.5" height="1.9"/><rect x="1.8" y="7.9" width="1.5" height="1.9"/><rect x="4.4" y="1.7" width="6.9" height="1.9"/><rect x="4.4" y="4.8" width="6.9" height="1.9"/><rect x="4.4" y="7.9" width="6.9" height="1.9"/></g></svg>
<svg class="ab" style="left:1758.3px;top:805.2px" width="13" height="11.5" viewBox="0 0 13 11.5"><rect x="0" y="0" width="13" height="11.5" rx="2.2" fill="#4a86b4"/><g fill="#fff"><rect x="1.6" y="1.6" width="4.3" height="3.6"/><rect x="7.1" y="1.6" width="4.3" height="3.6"/><rect x="1.6" y="6.3" width="4.3" height="3.6"/><rect x="7.1" y="6.3" width="4.3" height="3.6"/></g></svg>
<div class="ab" style="left:253px;top:842px;width:1576px;height:80px;border:1px solid #dee2e6;border-radius:4px;background:#fff"></div>
<div class="hl" style="left:253px;top:877px;width:1576px"></div>
<div class="ab" style="left:433px;top:878px;width:1px;height:30px;background:#dee2e6"></div>
<div class="ab" style="left:265px;top:846px;width:27px;height:27px;border-radius:3px;background:#eef0f2"></div>
<div class="ab" style="left:299px;top:846px;width:27px;height:27px;border-radius:3px;background:#eef0f2"></div>
<svg class="ab" style="left:274px;top:854px" width="8" height="11" viewBox="0 0 8 11"><path d="M6 1 L1.5 5.5 L6 10" fill="none" stroke="#3a4658" stroke-width="1.1"/></svg>
<svg class="ab" style="left:308px;top:854px" width="8" height="11" viewBox="0 0 8 11"><path d="M2 1 L6.5 5.5 L2 10" fill="none" stroke="#3a4658" stroke-width="1.1"/></svg>
<div class="ab" style="left:333px;top:846px;width:133px;height:27px;border-radius:3px;background:#eef0f2"></div>
<div class="tx" style="left:340px;top:853.0px;font-size:13px;color:#212529;font-weight:normal;">7 February 2024</div>
<svg class="ab" style="left:446px;top:857px" width="11" height="6.5" viewBox="-1 -1 11 6.5"><path d="M0 0 L4.5 4.5 L9 0" fill="none" stroke="#3a4658" stroke-width="1.1"/></svg>
<div class="tx" style="left:441px;top:888.5px;font-size:13px;color:#1a6fd0;font-weight:normal;">7 Feb, Wednesday</div>
<div class="ab" style="left:1497px;top:844px;width:49px;height:31px;border-radius:2px;background:#e6e6e6"></div>
<div class="tx" style="left:1321.5px;width:400px;text-align:center;top:853.0px;font-size:13px;color:#333;font-weight:normal;">Today</div>
<div class="ab" style="left:1569px;top:844px;width:36px;height:31px;border-radius:2px;background:#0676d6"></div>
<div class="tx" style="left:1387.0px;width:400px;text-align:center;top:853.0px;font-size:13px;color:#fff;font-weight:normal;">Day</div>
<div class="ab" style="left:1620px;top:844px;width:45px;height:31px;border-radius:2px;background:#e6e6e6"></div>
<div class="tx" style="left:1442.5px;width:400px;text-align:center;top:853.0px;font-size:13px;color:#333;font-weight:normal;">Week</div>
<div class="ab" style="left:1679px;top:844px;width:52px;height:31px;border-radius:2px;background:#e6e6e6"></div>
<div class="tx" style="left:1505.0px;width:400px;text-align:center;top:853.0px;font-size:13px;color:#333;font-weight:normal;">Month</div>
<div class="ab" style="left:1745px;top:844px;width:69px;height:31px;border-radius:2px;background:#e6e6e6"></div>
<div class="tx" style="left:1579.5px;width:400px;text-align:center;top:853.0px;font-size:13px;color:#333;font-weight:normal;">2 Months</div>
<div class="ab" style="left:1557px;top:849px;width:1px;height:20px;background:#d8d8d8"></div>
<svg class="ab" style="left:1874px;top:60px" width="22" height="20" viewBox="0 0 22 20" fill="none" stroke="#0a72d8" stroke-width="1.1" stroke-linejoin="round" stroke-linecap="round"><path d="M2 10 L10.6 2 L19.4 10"/><path d="M3.6 8.6 V16.6 Q3.6 17.6 4.6 17.6 H16.4 Q17.4 17.6 17.4 16.6 V8.6"/><path d="M8.3 17.6 V11.3 H12.8 V17.6"/></svg>
<svg class="ab" style="left:1874px;top:106px" width="22" height="22" viewBox="0 0 22 22" fill="none" stroke="#0a72d8" stroke-width="1.1" stroke-linejoin="round" stroke-linecap="round"><path d="M10.7 4.3 C7.6 4.3 6 6.8 6 9.8 V12.6 L3.6 16.7 H17.8 L15.4 12.6 V9.8 C15.4 6.8 13.8 4.3 10.7 4.3 Z"/><path d="M9.2 18.7 Q10.7 20.1 12.2 18.7"/></svg>
<div class="ab" style="left:1887px;top:104.8px;width:6px;height:6px;border-radius:50%;background:#f0141c"></div>
<svg class="ab" style="left:1874px;top:156px" width="22" height="20" viewBox="0 0 22 20" fill="none" stroke="#0a72d8" stroke-width="1.2"><circle cx="7.5" cy="5.5" r="3.5"/><path d="M1 18 C1 13 4 11 7.5 11 C9 11 10 11.3 11 12 M1 18 H12"/><circle cx="16" cy="13.5" r="4.5"/><path d="M16 11 V13.8 H18"/></svg>
<div class="ab" style="left:1887px;top:152px;width:6px;height:6px;border-radius:50%;background:#2e7030"></div>
<svg class="ab" style="left:1875px;top:203px" width="19" height="19" viewBox="0 0 19 19" fill="none" stroke="#0a72d8" stroke-width="1.2"><circle cx="9.5" cy="10" r="7.8"/><path d="M9.5 5.5 V10.5 L12.5 12.5"/></svg>
<div class="ab" style="left:1887px;top:200px;width:6px;height:6px;border-radius:50%;background:#e8141c"></div>
<svg class="ab" style="left:1875px;top:729px" width="19" height="19" viewBox="0 0 24 24" fill="none" stroke="#0a72d8" stroke-width="1.5" stroke-linejoin="round"><path d="M10.5 2 H13.5 L14.3 5 L16.8 6.4 L19.8 5.5 L21.3 8.1 L19 10.3 V13.7 L21.3 15.9 L19.8 18.5 L16.8 17.6 L14.3 19 L13.5 22 H10.5 L9.7 19 L7.2 17.6 L4.2 18.5 L2.7 15.9 L5 13.7 V10.3 L2.7 8.1 L4.2 5.5 L7.2 6.4 L9.7 5 Z"/><circle cx="12" cy="12" r="3"/></svg>
<svg class="ab" style="left:1875px;top:777px" width="19" height="19" viewBox="0 0 19 19" fill="none" stroke="#0a72d8" stroke-width="1.1"><circle cx="9.5" cy="9.8" r="7.7"/><path d="M7.4 8 C7.4 6.5 8.3 5.7 9.6 5.7 C10.9 5.7 11.8 6.5 11.8 7.7 C11.8 9.4 9.6 9.5 9.6 11.4"/><circle cx="9.6" cy="13.6" r=".55" fill="#0a72d8"/></svg>
<svg class="ab" style="left:1876.5px;top:827px" width="17" height="16" viewBox="0 0 17 16" fill="none" stroke="#0a72d8" stroke-width="1.1" stroke-linejoin="round"><path d="M4 0.8 H1.1 V14.6 H4"/><path d="M5.2 5.6 H9.4 V2.4 L15.4 7.7 L9.4 13 V9.8 H5.2 Z"/></svg>
<svg class="ab" style="left:1872px;top:862px" width="26" height="28" viewBox="0 0 26 28"><rect x="10.3" y="2.2" width="3.6" height="3.6" rx="1" fill="none" stroke="#0a72d8" stroke-width="1.1"/><path d="M12.1 5.8 V7.6" stroke="#0a72d8" stroke-width="1.8"/><path d="M3.4 13 C4.8 9.2 8.2 7 12.1 7 C16 7 19.4 9.2 20.8 13 Z" fill="#0a72d8"/><path d="M3.6 19 C4.2 23.2 7.6 25.8 11.8 25.8 C13.6 25.8 14.6 25.4 15.6 25.2 C17.6 25.6 20 26 22.2 25.9 C21.2 25 20.6 23.4 20.9 21.6 C21.2 20.8 21.4 19.9 21.4 19 Z" fill="#0a72d8"/><rect x="1.9" y="12.4" width="21" height="7.2" rx="3.4" fill="#fff" stroke="#0a72d8" stroke-width="1.3"/><circle cx="7.3" cy="16" r="2.3" fill="#0a72d8"/><circle cx="16.6" cy="16" r="2.3" fill="#0a72d8"/></svg>
<svg class="ab" style="left:248px;top:78px" width="15" height="20" viewBox="0 0 15 20" fill="none" stroke="#7d8691" stroke-width="1.25" stroke-linejoin="round"><path d="M2.2 2.9 H12.4"/><path d="M4.6 2.9 V7.8 L1.8 12.2 H12.9 L10.1 7.8 V2.9"/><path d="M7.2 8.2 V17.8"/></svg>
<svg class="ab" style="left:270px;top:77px" width="27" height="22" viewBox="0 0 27 22" fill="none" stroke="#1f73d9" stroke-width="1.15" stroke-linecap="round"><circle cx="6.5" cy="4.5" r="2.2"/><circle cx="20.5" cy="4.2" r="2.2"/><circle cx="13" cy="10.2" r="2.7"/><path d="M1.6 12.8 C2.4 10.4 4.4 9.2 7.6 9.1 M18.4 9.1 C21.4 9.1 23.6 10.2 25 12.2 M6 20.4 C6 17.2 8.6 15.4 13 15.4 C14 15.4 15 15.5 15.8 15.8"/><path d="M23.56 14.52 L24.96 14.87 L24.96 17.13 L23.56 17.48 L23.31 17.91 L23.71 19.30 L21.75 20.43 L20.75 19.39 L20.25 19.39 L19.25 20.43 L17.29 19.30 L17.69 17.91 L17.44 17.48 L16.04 17.13 L16.04 14.87 L17.44 14.52 L17.69 14.09 L17.29 12.70 L19.25 11.57 L20.25 12.61 L20.75 12.61 L21.75 11.57 L23.71 12.70 L23.31 14.09 Z" stroke-linejoin="round"/><circle cx="20.5" cy="16" r="1.3"/></svg>
</div></body></html>
